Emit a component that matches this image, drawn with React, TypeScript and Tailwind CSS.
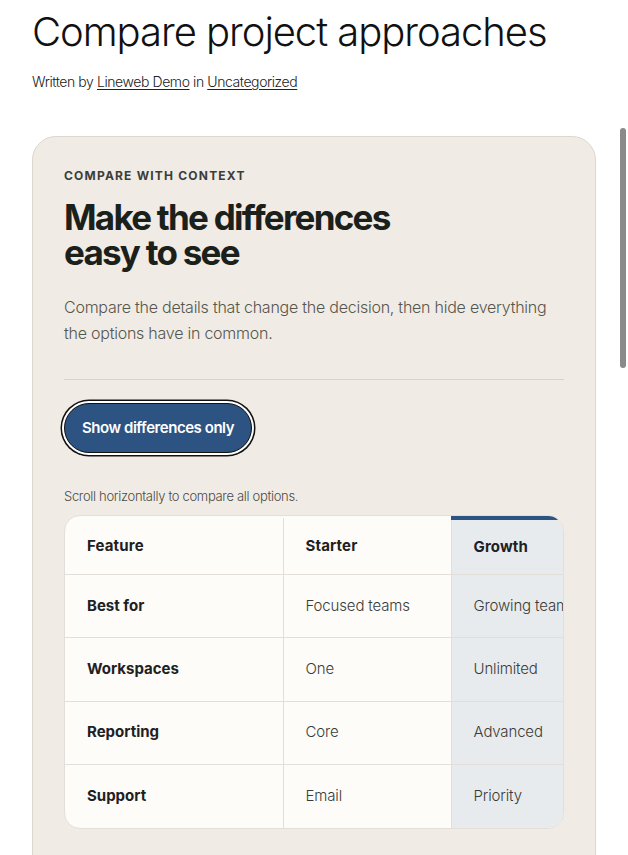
const rows = [
  { feature: "Best for", starter: "Focused teams", growth: "Growing teams", scale: "Large orgs" },
  { feature: "Workspaces", starter: "One", growth: "Unlimited", scale: "Unlimited" },
  { feature: "Reporting", starter: "Core", growth: "Advanced", scale: "Custom" },
  { feature: "Support", starter: "Email", growth: "Priority", scale: "Dedicated" },
];

function CompareTable() {
  return (
    <div className="overflow-hidden rounded-2xl border border-[#e3ded7] bg-[#fdfcf9]">
      <table className="w-[720px] border-collapse text-left text-[15px]">
        <thead>
          <tr className="h-[57px]">
            <th className="w-[218px] border-r border-[#e3ded7] px-[22px] font-bold tracking-[0.01em] text-[#1f211f]">Feature</th>
            <th className="w-[168px] border-r border-[#e3ded7] px-[22px] font-bold tracking-[0.01em] text-[#1f211f]">Starter</th>
            <th className="w-[168px] rounded-tl-md border-t-4 border-[#2d5383] bg-[#e7ebee] px-[22px] font-bold tracking-[0.01em] text-[#1f211f]">
              Growth
            </th>
            <th className="px-[22px] font-bold text-[#1f211f]">Scale</th>
          </tr>
        </thead>
        <tbody>
          {rows.map((row) => (
            <tr key={row.feature} className="h-[63.25px] border-t border-[#e3ded7]">
              <th className="border-r border-[#e3ded7] px-[22px] font-bold text-[#1f211f]">{row.feature}</th>
              <td className="border-r border-[#e3ded7] px-[22px] font-light tracking-[-0.01em] text-[#3a3b38]">{row.starter}</td>
              <td className="whitespace-nowrap bg-[#e7ebee] px-[22px] font-light tracking-[-0.01em] text-[#3a3b38]">{row.growth}</td>
              <td className="px-[22px] font-light text-[#3a3b38]">{row.scale}</td>
            </tr>
          ))}
        </tbody>
      </table>
    </div>
  );
}

export default function App() {
  return (
    <div className="relative min-h-[855px] bg-white px-8 pt-[8px] font-['Inter',sans-serif] text-[#111]">
      <h1 className="text-[40px] font-light leading-[1.2] tracking-[-0.026em]">Compare project approaches</h1>
      <p className="mt-[15px] text-[14px] font-light tracking-[-0.03em] text-[#222]">
        Written by <a className="underline underline-offset-2" href="#">Lineweb Demo</a> in{" "}
        <a className="underline underline-offset-2" href="#">Uncategorized</a>
      </p>

      <section className="mt-[44px] rounded-t-[24px] border border-[#ddd6cd] bg-[#f0ebe5] px-[31px] pb-12 pt-[30px]">
        <p className="text-[12px] font-bold uppercase tracking-[0.1em] text-[#3c3d38]">Compare with context</p>
        <h2 className="mt-[15px] max-w-[340px] text-[35px] font-bold leading-[35px] tracking-[-0.05em] text-[#1b201b]">
          Make the differences easy to see
        </h2>
        <p className="mt-[24px] text-[16px] font-light leading-[26px] tracking-[-0.015em] text-[#56574f]">
          Compare the details that change the decision, then hide everything the options have in common.
        </p>
        <hr className="mt-[33px] border-[#d9d2c9]" />
        <button
          type="button"
          className="mt-[23px] h-[50px] rounded-full border-[1.5px] border-[#111] bg-[#2d5383] px-[17px] text-[15px] font-semibold tracking-[-0.03em] text-white shadow-[0_0_0_2px_#fff,0_0_0_3.5px_#111]"
        >
          Show differences only
        </button>
        <p className="mt-[34px] text-[13px] font-light tracking-[-0.025em] text-[#4a4b46]">
          Scroll horizontally to compare all options.
        </p>
        <div className="mt-[8px]">
          <CompareTable />
        </div>
      </section>

      <div aria-hidden className="absolute right-[2px] top-[128px] h-[240px] w-[6px] rounded-full bg-[#8a8a8a]" />
    </div>
  );
}
